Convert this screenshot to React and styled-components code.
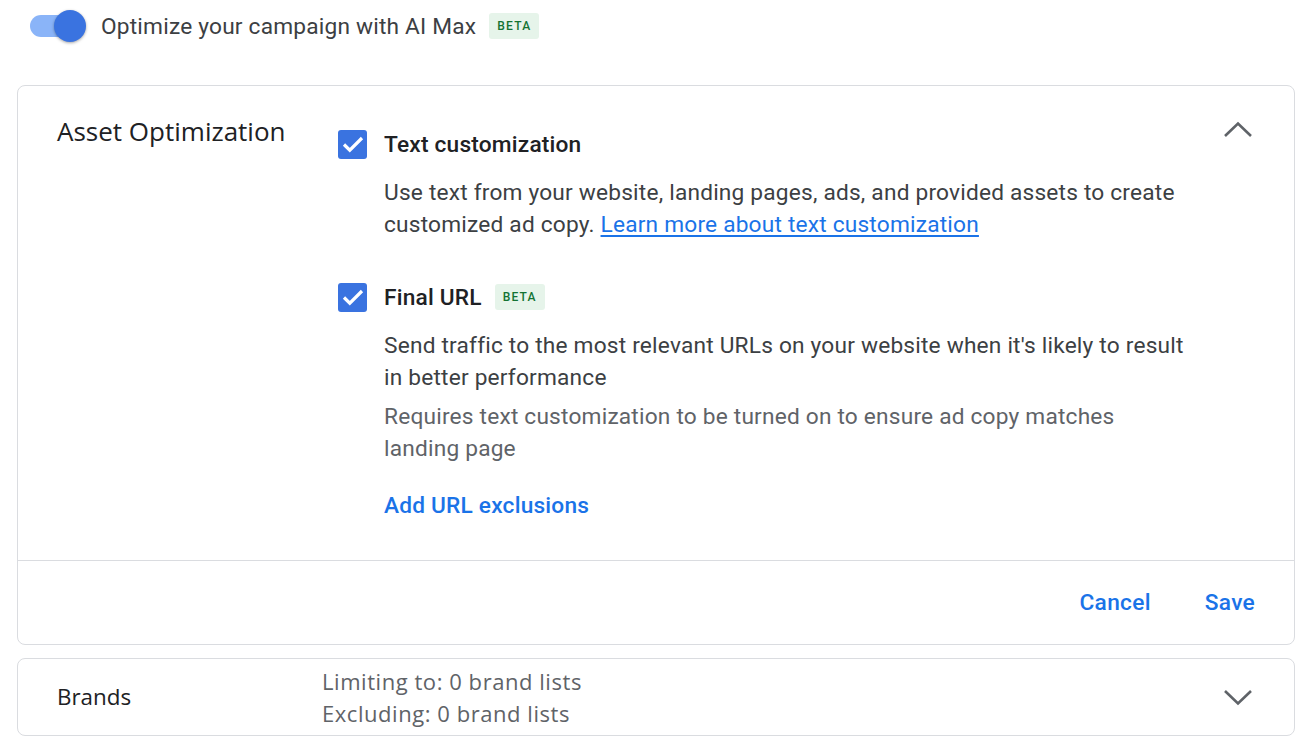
import styled, { createGlobalStyle } from "styled-components";

const Global = createGlobalStyle`
  body {
    margin: 0;
    background: #fff;
    font-family: Roboto, "Noto Sans", Arial, sans-serif;
    color: #3c4043;
  }
`

const Page = styled.div`
  width: 1310px;
  padding: 6px 15px 0 17px;
  box-sizing: border-box;
`

const ToggleRow = styled.div`
  display: flex;
  align-items: center;
  height: 40px;
  padding-left: 13px;
  margin-bottom: 39px;
`

const Track = styled.div`
  position: relative;
  width: 55px;
  height: 22px;
  border-radius: 11px;
  background: #8ab4f8;
  margin-right: 16px;
`

const Thumb = styled.div`
  position: absolute;
  right: -1px;
  top: -5px;
  width: 32px;
  height: 32px;
  border-radius: 50%;
  background: #3a73e0;
  box-shadow: 0 1px 3px rgba(0,0,0,0.35);
`

const ToggleLabel = styled.span`
  font-size: 22.7px;
  color: #3c4043;
  letter-spacing: 0.2px;
`

const Badge = styled.span`
  display: inline-flex;
  align-items: center;
  height: 26px;
  padding: 0 8px;
  margin-left: ${p => p.$gap || 13}px;
  border-radius: 3px;
  background: #e6f4ea;
  color: #137333;
  font-size: 12px;
  font-weight: 500;
  letter-spacing: 1.2px;
`

const Card = styled.div`
  border: 1px solid #dadce0;
  border-radius: 8px;
  background: #fff;
  margin-bottom: 13px;
`

const CardBody = styled.div`
  display: grid;
  grid-template-columns: ${p => p.$cols || "281px 1fr 80px"};
  padding: ${p => p.$pad || "28px 0 38px 39px"};
  align-items: ${p => p.$align || "start"};
`

const SectionTitle = styled.div`
  font-family: "Open Sans", Roboto, sans-serif;
  font-size: ${p => p.$size || 26}px;
  color: #202124;
  line-height: 34px;
`

const Options = styled.div`
  display: flex;
  flex-direction: column;
`

const Option = styled.div`
  margin-bottom: ${p => p.$mb || 0}px;
`

const OptionHead = styled.div`
  display: flex;
  align-items: center;
  height: 30px;
  margin-top: ${p => p.$mt || 0}px;
`

const Check = styled.div`
  width: 29px;
  height: 29px;
  border-radius: 3px;
  background: #3a73e0;
  display: flex;
  align-items: center;
  justify-content: center;
  margin-right: 17px;
`

const OptionTitle = styled.span`
  font-size: 22.7px;
  font-weight: 500;
  color: #202124;
  letter-spacing: 0.2px;
`

const Desc = styled.p`
  margin: ${p => p.$mt || 18}px 0 0 46px;
  max-width: 804px;
  font-size: 22.7px;
  line-height: 32px;
  letter-spacing: 0.2px;
  color: ${p => p.$muted ? "#5f6368" : "#3c4043"};
`

const Link = styled.a`
  color: #1a73e8;
  text-decoration: underline;
  text-underline-offset: 3px;
`

const ActionLink = styled.a`
  display: inline-block;
  margin: 25px 0 0 46px;
  font-size: 22.7px;
  line-height: 32px;
  font-weight: 500;
  letter-spacing: 0.2px;
  color: #1a73e8;
  text-decoration: none;
`

const Chevron = styled.div`
  display: flex;
  justify-content: flex-end;
  padding-right: 41px;
  padding-top: ${p => p.$top || 0}px;
`

const Footer = styled.div`
  border-top: 1px solid #dadce0;
  display: flex;
  justify-content: flex-end;
  align-items: center;
  gap: 54px;
  height: 83px;
  padding-right: 39px;
`

const TextButton = styled.button`
  border: none;
  background: none;
  padding: 0;
  font-family: Roboto, sans-serif;
  font-size: 22.7px;
  font-weight: 500;
  letter-spacing: 0.3px;
  color: #1a73e8;
  cursor: pointer;
`

const Summary = styled.div`
  font-family: "Open Sans", Roboto, sans-serif;
  font-size: 22px;
  line-height: 32px;
  letter-spacing: 0.55px;
  color: #5f6368;
`

const ChevronIcon = ({ up }) => (
  <svg width="30" height="18" viewBox="0 0 30 18">
    <path
      d={up ? "M2 15 L15 2.5 L28 15" : "M2 3 L15 15.5 L28 3"}
      fill="none"
      stroke="#5f6368"
      strokeWidth="2.6"
    />
  </svg>
)

const CheckMark = () => (
  <svg width="24" height="24" viewBox="0 0 24 24">
    <path d="M3 12.5 L8.8 18.2 L21 6" fill="none" stroke="#fff" strokeWidth="3.2" />
  </svg>
)

export default function App() {
  return (
    <Page>
      <Global />
      <ToggleRow>
        <Track><Thumb /></Track>
        <ToggleLabel>Optimize your campaign with AI Max</ToggleLabel>
        <Badge>BETA</Badge>
      </ToggleRow>

      <Card>
        <CardBody>
          <SectionTitle>Asset Optimization</SectionTitle>
          <Options>
            <Option $mb={41}>
              <OptionHead $mt={15}>
                <Check><CheckMark /></Check>
                <OptionTitle>Text customization</OptionTitle>
              </OptionHead>
              <Desc>
                Use text from your website, landing pages, ads, and provided assets to create
                customized ad copy. <Link href="#">Learn more about text customization</Link>
              </Desc>
            </Option>
            <Option>
              <OptionHead>
                <Check><CheckMark /></Check>
                <OptionTitle>Final URL</OptionTitle>
                <Badge>BETA</Badge>
              </OptionHead>
              <Desc>
                Send traffic to the most relevant URLs on your website when it's likely to result
                in better performance
              </Desc>
              <Desc $mt={7} $muted>
                Requires text customization to be turned on to ensure ad copy matches
                landing page
              </Desc>
              <ActionLink href="#">Add URL exclusions</ActionLink>
            </Option>
          </Options>
          <Chevron $top={7}><ChevronIcon up /></Chevron>
        </CardBody>
        <Footer>
          <TextButton>Cancel</TextButton>
          <TextButton>Save</TextButton>
        </Footer>
      </Card>

      <Card>
        <CardBody $cols="265px 1fr 80px" $pad="6px 0 6px 39px" $align="center">
          <SectionTitle $size={22.4}>Brands</SectionTitle>
          <Summary>
            Limiting to: 0 brand lists<br />
            Excluding: 0 brand lists
          </Summary>
          <Chevron><ChevronIcon /></Chevron>
        </CardBody>
      </Card>
    </Page>
  )
}
